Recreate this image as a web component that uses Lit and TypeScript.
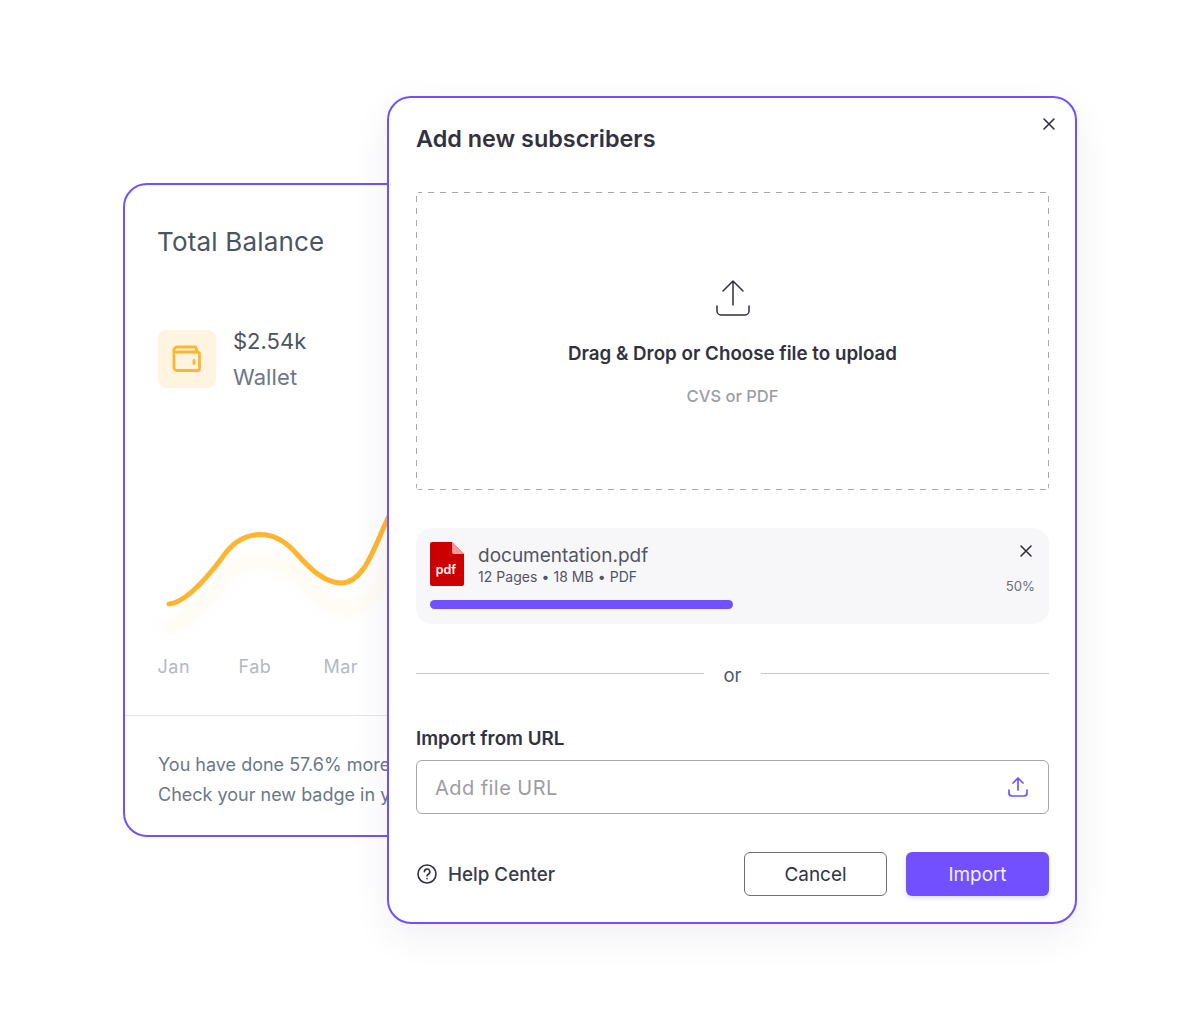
import { LitElement, html, css } from "lit";
import { customElement } from "lit/decorators.js";

@customElement("app-root")
export class AppRoot extends LitElement {
  static styles = css`
    :host { display: block; width: 1200px; height: 1020px; background: #fff; font-family: Inter, "Liberation Sans", sans-serif; overflow: hidden; }
    * { box-sizing: border-box; }
    .stage { position: relative; width: 1200px; height: 1020px; }
    .card { position: absolute; left: 123px; top: 183px; width: 620px; height: 654px; border: 2px solid #7350ff; border-radius: 24px; background: #fff; display: flex; flex-direction: column; padding-top: 41px; }
    .card-title { margin: 0 0 0 32px; font-size: 26px; line-height: 32px; font-weight: 400; color: #4a5561; letter-spacing: 0.18px; }
    .wallet { display: flex; gap: 17px; height: 58px; margin: 72px 0 0 33px; align-items: center; }
    .wallet-icon { width: 58px; height: 58px; border-radius: 8px; background: #fff4e0; display: flex; align-items: center; justify-content: center; }
    .amount { font-size: 22px; line-height: 30px; color: #4a5561; }
    .wallet-label { font-size: 22px; line-height: 30px; color: #6d7885; margin-top: 6px; letter-spacing: 0.1px; }
    .chart { display: block; margin: 111px 0 0 0; overflow: visible; }
    .months { display: flex; margin: 26px 0 0 32.5px; font-size: 18px; line-height: 24px; color: #b4b9c0; letter-spacing: 0.5px; }
    .months span:nth-child(1) { width: 81px; }
    .months span:nth-child(2) { width: 85px; }
    .rule { height: 1px; background: #e4e6ea; margin-top: 36px; }
    .note { margin: 34px 0 0 33px; font-size: 18px; line-height: 30px; color: #6d7885; white-space: nowrap; }

    .modal { position: absolute; left: 387px; top: 96px; width: 690px; height: 828px; border: 2px solid #7350ff; border-radius: 24px; background: #fff; padding: 0 26px 0 27px; display: flex; flex-direction: column; box-shadow: 0 12px 36px rgba(60, 50, 110, 0.08); }
    .close { position: absolute; left: 653px; top: 19px; }
    .title { margin: 26px 0 0; font-size: 23.4px; line-height: 30px; font-weight: 600; color: #32323f; }
    .drop { margin-top: 38px; height: 298px; border-radius: 4px; background-image:
        repeating-linear-gradient(90deg, #a9a9ad 0 6px, transparent 6px 12px), repeating-linear-gradient(90deg, #a9a9ad 0 6px, transparent 6px 12px),
        repeating-linear-gradient(0deg, #a9a9ad 0 6px, transparent 6px 12px), repeating-linear-gradient(0deg, #a9a9ad 0 6px, transparent 6px 12px);
      background-size: 100% 1px, 100% 1px, 1px 100%, 1px 100%; background-position: 0 0, 0 100%, 0 0, 100% 0; background-repeat: no-repeat;
      display: flex; flex-direction: column; align-items: center; padding-top: 87px; }
    .drop-title { margin-top: 24px; font-size: 18.75px; line-height: 26px; font-weight: 600; color: #32323f; }
    .drop-sub { margin-top: 17px; font-size: 16.5px; line-height: 24px; font-weight: 500; color: #9d9da3; }
    .file { margin-top: 38px; height: 96px; border-radius: 16px; background: #f7f7f9; padding: 14px 14px 0; display: flex; flex-direction: column; }
    .file-top { display: flex; gap: 14px; height: 44px; }
    .file-icon { flex: none; }
    .file-info { flex: 1; }
    .file-name { font-size: 19px; line-height: 26px; color: #55555f; margin-top: 1px; }
    .file-meta { font-size: 14px; line-height: 18px; color: #55555f; margin-top: -1px; letter-spacing: 0.05px; }
    .file-side { display: flex; flex-direction: column; align-items: flex-end; }
    .file-x { display: block; flex: none; margin: 2px 2px 0 0; }
    .pct { flex: none; margin-top: 19px; font-size: 13.2px; line-height: 18px; color: #6e6e78; }
    .bar { margin-top: 14px; width: 303px; height: 9px; border-radius: 5px; background: #7350ff; }
    .or { margin-top: 39px; display: flex; align-items: center; gap: 19px; font-size: 18.5px; line-height: 24px; color: #55555f; }
    .or i { flex: 1; height: 1px; background: #c9c9cd; margin-top: -3px; }
    .label { margin-top: 39px; font-size: 18.75px; line-height: 26px; font-weight: 600; color: #32323f; }
    .input { margin-top: 8px; height: 54px; border: 1px solid #a6a6ab; border-radius: 6px; display: flex; align-items: center; justify-content: space-between; padding: 1px 20px 0 18px; font-size: 20px; color: #9d9da3; letter-spacing: 0.45px; }
    .input-icon { margin-bottom: 3px; }
    .foot { margin-top: 38px; display: flex; align-items: center; }
    .help { display: flex; align-items: center; gap: 11px; font-size: 18.8px; font-weight: 500; color: #3a3a48; flex: 1; padding-left: 1px; }
    .btn { height: 44px; border-radius: 6px; display: flex; align-items: center; justify-content: center; font-size: 18.9px; font-family: inherit; }
    .cancel { width: 143px; background: #fff; border: 1px solid #6e6e78; color: #32323f; }
    .import { width: 143px; margin-left: 19px; background: #7350ff; border: 0; color: #f3f0ff; box-shadow: 0 2px 4px rgba(60, 50, 110, 0.18); }
  `;

  render() {
    return html`<div class="stage">
      <section class="card">
        <h2 class="card-title">Total Balance</h2>
        <div class="wallet">
          <div class="wallet-icon">
            <svg width="30" height="28" viewBox="0 0 30 28" fill="none" stroke="#ffb52e" stroke-width="2.8" stroke-linejoin="round" stroke-linecap="round">
              <path d="M2 6.5V22.5a3 3 0 0 0 3 3H25.5a2 2 0 0 0 2-2V9a2 2 0 0 0-2-2H4.5" />
              <path d="M2 6.5A3.5 3.5 0 0 1 5.5 2H22a2.5 2.5 0 0 1 2.5 2.5V7" />
              <path d="M22 15.5v3" />
            </svg>
          </div>
          <div>
            <div class="amount">$2.54k</div>
            <div class="wallet-label">Wallet</div>
          </div>
        </div>
        <svg class="chart" width="616" height="130" viewBox="0 0 616 130" fill="none">
          <defs><filter id="b" x="-20%" y="-50%" width="140%" height="200%"><feGaussianBlur stdDeviation="7" /></filter></defs>
          <path d="M43 105C58 104 78 84 97 59C115 32 155 26 188 65C210 90 240 96 255 65C264 48 268 30 275 15" stroke="#ffb52e" stroke-opacity="0.1" stroke-width="7" filter="url(#b)" transform="translate(-2 24)" stroke-linecap="round" />
          <path d="M44 105C58 104 78 84 97 59C115 32 145 26 170 53C185 70 200 84 216 84C240 84 250 45 264 17" stroke="#ffb52e" stroke-width="5" stroke-linecap="round" />
        </svg>
        <div class="months"><span>Jan</span><span>Fab</span><span>Mar</span></div>
        <div class="rule"></div>
        <p class="note">You have done 57.6% more sales<br />Check your new badge in your profile</p>
      </section>

      <section class="modal">
        <svg class="close" width="14" height="14" viewBox="0 0 14 14" fill="none" stroke="#2f2f3d" stroke-width="1.6" stroke-linecap="round"><path d="M2 2l10 10M12 2L2 12" /></svg>
        <h1 class="title">Add new subscribers</h1>
        <div class="drop">
          <svg width="34" height="38" viewBox="0 0 34 38" fill="none" stroke="#2f2f3d" stroke-width="1.5" stroke-linecap="round" stroke-linejoin="round">
            <path d="M17 26V2M7 12L17 2l10 10" />
            <path d="M1 27v5a4 4 0 0 0 4 4H29a4 4 0 0 0 4-4v-5" />
          </svg>
          <div class="drop-title">Drag &amp; Drop or Choose file to upload</div>
          <div class="drop-sub">CVS or PDF</div>
        </div>
        <div class="file">
          <div class="file-top">
            <svg class="file-icon" width="34" height="44" viewBox="0 0 34 44">
              <path d="M2 0H22L34 12V42a2 2 0 0 1-2 2H2a2 2 0 0 1-2-2V2a2 2 0 0 1 2-2z" fill="#cc0000" />
              <path d="M22 0L34 12H24a2 2 0 0 1-2-2z" fill="#ff9a94" />
              <text x="16" y="32" text-anchor="middle" fill="#fff" font-family="Inter, sans-serif" font-size="12.5" font-weight="600">pdf</text>
            </svg>
            <div class="file-info">
              <div class="file-name">documentation.pdf</div>
              <div class="file-meta">12 Pages • 18 MB • PDF</div>
            </div>
            <div class="file-side">
              <svg class="file-x" width="14" height="14" viewBox="0 0 14 14" fill="none" stroke="#2f2f3d" stroke-width="1.6" stroke-linecap="round"><path d="M2 2l10 10M12 2L2 12" /></svg>
              <div class="pct">50%</div>
            </div>
          </div>
          <div class="bar"></div>
        </div>
        <div class="or"><i></i><span>or</span><i></i></div>
        <div class="label">Import from URL</div>
        <div class="input">
          <span>Add file URL</span>
          <svg class="input-icon" width="20" height="21" viewBox="0 0 20 21" fill="none" stroke="#7350ff" stroke-width="1.7" stroke-linecap="round" stroke-linejoin="round">
            <path d="M10 14V2M5 7l5-5 5 5" />
            <path d="M1 14v3a3 3 0 0 0 3 3H16a3 3 0 0 0 3-3v-3" />
          </svg>
        </div>
        <div class="foot">
          <div class="help">
            <svg width="20" height="20" viewBox="0 0 20 20" fill="none" stroke="#2f2f3d" stroke-width="1.6" stroke-linecap="round">
              <circle cx="10" cy="10" r="9" />
              <path d="M7.4 7.7A2.7 2.7 0 1 1 11.3 10.2C10.5 10.7 10 11 10 12" />
              <path d="M10 14.6v.1" />
            </svg>
            <span>Help Center</span>
          </div>
          <div class="btn cancel">Cancel</div>
          <div class="btn import">Import</div>
        </div>
      </section>
    </div>`;
  }
}
